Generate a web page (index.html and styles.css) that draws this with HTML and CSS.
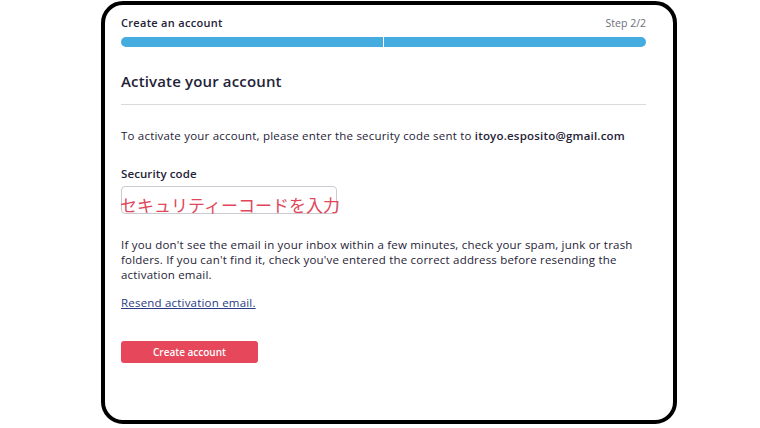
FILE: index.html
```html
<!DOCTYPE html>
<html lang="en">
<head>
<meta charset="utf-8">
<title>Activate your account</title>
<link rel="stylesheet" href="styles.css">
</head>
<body>
<div class="frame">
  <div class="header">
    <span class="header-title">Create an account</span>
    <span class="step">Step 2/2</span>
  </div>
  <div class="progress">
    <div class="progress-seg"></div>
    <div class="progress-seg"></div>
  </div>
  <h1 class="title">Activate your account</h1>
  <hr class="divider">
  <p class="intro">To activate your account, please enter the security code sent to <strong>itoyo.esposito@gmail.com</strong></p>
  <label class="label">Security code</label>
  <div class="input-wrap">
    <div class="input"></div>
    <span class="annotation">セキュリティーコードを入力</span>
  </div>
  <p class="help">If you don't see the email in your inbox within a few minutes, check your spam, junk or trash folders. If you can't find it, check you've entered the correct address before resending the activation email.</p>
  <a class="link" href="#">Resend activation email.</a>
  <button class="button">Create account</button>
</div>
</body>
</html>
```
FILE: styles.css
```css
* { box-sizing: border-box; }
html, body { margin: 0; padding: 0; background: #fff; }
body {
  font-family: "Open Sans", "Liberation Sans", sans-serif;
  color: #1f2338;
  width: 760px;
  height: 428px;
  overflow: hidden;
}
.frame {
  margin: 1px 0 0 101px;
  width: 576px;
  height: 423px;
  border: 4px solid #000;
  border-radius: 22px;
  padding: 10px 27px 0 16px;
  display: flex;
  flex-direction: column;
  align-items: flex-start;
}
.header {
  width: 100%;
  display: flex;
  justify-content: space-between;
  font-size: 11px;
  line-height: 16px;
}
.header-title { font-weight: 600; color: #1f2338; letter-spacing: 0.3px; }
.step { color: #6b6e7a; font-size: 10.5px; }
.progress {
  width: 100%;
  margin-top: 6px;
  height: 10px;
  display: flex;
  gap: 1px;
  border-radius: 5px;
  overflow: hidden;
}
.progress-seg { flex: 1; background: #45ace0; }
.title {
  margin: 24px 0 0;
  font-size: 15px;
  line-height: 20px;
  font-weight: 600;
  color: #1f2338;
  letter-spacing: 0.15px;
}
.divider {
  width: 100%;
  margin: 13px 0 0;
  border: 0;
  height: 1px;
  background: #d9dadd;
}
.intro, .label, .help, .link {
  font-size: 11.5px;
  line-height: 15px;
  letter-spacing: 0.2px;
}
.intro { margin: 23px 0 0; }
.intro strong { font-weight: 600; }
.label {
  margin-top: 23px;
  font-weight: 600;
  letter-spacing: 0.1px;
}
.input-wrap {
  position: relative;
  margin-top: 5px;
}
.input {
  width: 216px;
  height: 28px;
  border: 1px solid #c9cbd0;
  border-radius: 4px;
}
.annotation {
  position: absolute;
  left: -1px;
  top: 7px;
  white-space: nowrap;
  font-family: "Noto Sans CJK JP", sans-serif;
  font-size: 17px;
  line-height: 24px;
  color: #e0475a;
}
.help {
  margin: 23px 0 0;
  max-width: 528px;
}
.link {
  margin-top: 13px;
  color: #2a3b84;
  text-decoration: underline;
}
.button {
  margin-top: 31px;
  width: 137px;
  height: 22px;
  border: 0;
  border-radius: 3px;
  background: #e6475a;
  color: #fff;
  font-family: inherit;
  font-size: 10px;
  font-weight: 600;
  padding: 0;
}
```
